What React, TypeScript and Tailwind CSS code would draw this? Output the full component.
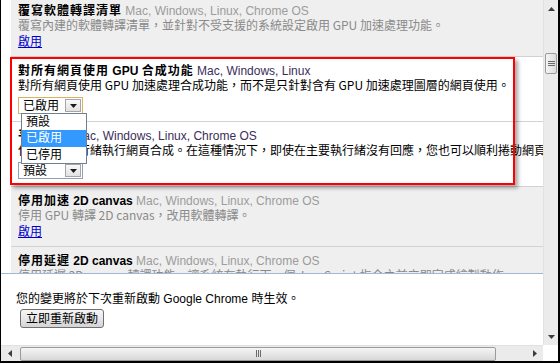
import React from "react";

const T = ({ children }: { children: React.ReactNode }) => (
  <span className="tracking-[1px]">{children}</span>
);

const Tri = ({ dir, color = "#3c3c3c" }: { dir: "up" | "down" | "left" | "right"; color?: string }) => {
  const pts: Record<string, string> = {
    up: "0,4 3.5,0 7,4",
    down: "0,0 7,0 3.5,4",
    left: "4,0 4,7 0,3.5",
    right: "0,0 0,7 4,3.5",
  };
  const w = dir === "up" || dir === "down" ? 7 : 4;
  const h = dir === "up" || dir === "down" ? 4 : 7;
  return (
    <svg width={w} height={h} viewBox={`0 0 ${w} ${h}`}>
      <polygon points={pts[dir]} fill={color} />
    </svg>
  );
};

function Item({
  title,
  platforms,
  desc,
  disabled,
  children,
}: {
  title: React.ReactNode;
  platforms: string;
  desc: React.ReactNode;
  disabled?: boolean;
  children?: React.ReactNode;
}) {
  return (
    <div
      className={`${disabled ? "bg-[#efefef]" : "bg-white"} border-b border-[#d2d2d2] pl-[7px] pt-[7px] pb-[7px] whitespace-nowrap overflow-hidden`}
    >
      <div className="h-[14px] leading-[14px]">
        <span className="font-bold text-black">{title}</span>{" "}
        <span className={disabled ? "text-[#9c9c9c]" : "text-[#3a2d5c]"}>{platforms}</span>
      </div>
      <div
        className={`h-[14px] leading-[14px] font-['Noto_Sans_CJK_TC',sans-serif] ${disabled ? "text-[#8a8a8a]" : "text-black"}`}
      >
        {desc}
      </div>
      {children}
    </div>
  );
}

function Combo({ value, focused }: { value: string; focused?: boolean }) {
  return (
    <div
      className={`mt-[5px] w-[65px] h-[17px] flex items-center justify-between border ${focused ? "border-[#dcb062]" : "border-[#8fa3b8]"} bg-white`}
    >
      <span className="pl-[4px] leading-[14px] text-black">{value}</span>
      <div className="mr-[1px] w-[16px] h-[13px] flex items-center justify-center border border-[#a6a6a6] bg-gradient-to-b from-[#fafafa] to-[#e2e2e2]">
        <Tri dir="down" color="#1a1a1a" />
      </div>
    </div>
  );
}

export default function App() {
  return (
    <div
      className="relative w-[560px] h-[363px] overflow-hidden bg-white border-l border-l-black border-r-2 border-r-black border-b-2 border-b-black text-[12px]"
      style={{ fontFamily: '"Liberation Sans", "Noto Sans CJK TC", sans-serif' }}
    >
      <div className="flex h-[345px]">
        <div className="w-[542px] flex flex-col">
          <div className="h-[273px] overflow-hidden pl-[10px]">
            <div className="mt-[-3px]">
              <Item
                disabled
                title={<T>覆寫軟體轉譯清單</T>}
                platforms="Mac, Windows, Linux, Chrome OS"
                desc="覆寫內建的軟體轉譯清單，並針對不受支援的系統設定啟用 GPU 加速處理功能。"
              >
                <div className="mt-[3px] h-[14px] leading-[14px]">
                  <span className="text-[#0000cc] underline">啟用</span>
                </div>
              </Item>
              <Item
                title={
                  <>
                    <T>對所有網頁使用</T> GPU <T>合成功能</T>
                  </>
                }
                platforms="Mac, Windows, Linux"
                desc="對所有網頁使用 GPU 加速處理合成功能，而不是只針對含有 GPU 加速處理圖層的網頁使用。"
              >
                <Combo value="已啟用" focused />
              </Item>
              <Item
                title={<T>平行合成</T>}
                platforms="Mac, Windows, Linux, Chrome OS"
                desc="使用次要執行緒執行網頁合成。在這種情況下，即使在主要執行緒沒有回應，您也可以順利捲動網頁。"
              >
                <Combo value="預設" />
              </Item>
              <Item
                disabled
                title={
                  <>
                    <T>停用加速</T> 2D canvas
                  </>
                }
                platforms="Mac, Windows, Linux, Chrome OS"
                desc="停用 GPU 轉譯 2D canvas，改用軟體轉譯。"
              >
                <div className="mt-[3px] h-[14px] leading-[14px]">
                  <span className="text-[#0000cc] underline">啟用</span>
                </div>
              </Item>
              <Item
                disabled
                title={
                  <>
                    <T>停用延遲</T> 2D canvas
                  </>
                }
                platforms="Mac, Windows, Linux, Chrome OS"
                desc="停用延遲 2D canvas 轉譯功能，讓系統在執行下一個 JavaScript 指令之前立即完成繪製動作。"
              >
                <div className="mt-[3px] h-[14px] leading-[14px]">
                  <span className="text-[#0000cc] underline">啟用</span>
                </div>
              </Item>
            </div>
          </div>
          <div className="flex-1 border-t border-[#9db9d6] bg-white pl-[15px] pt-[18px]">
            <div className="h-[14px] leading-[14px] text-black whitespace-nowrap">
              您的變更將於下次重新啟動 Google Chrome 時生效。
            </div>
            <button className="mt-[3px] ml-[4px] h-[19px] w-[84px] flex items-center justify-center rounded-[3px] border border-[#707070] bg-gradient-to-b from-[#f6f6f6] via-[#e8e8e8] to-[#d3d3d3] text-black leading-[14px]">
              立即重新啟動
            </button>
          </div>
        </div>
        <div className="w-[15px] flex flex-col bg-[#ebebeb] border-l border-[#e2e2e2]">
          <div className="h-[17px] flex items-center justify-center">
            <Tri dir="up" />
          </div>
          <div className="h-[36px]" />
          <div className="mx-[1px] h-[21px] rounded-[2px] border border-[#9b9b9b] bg-gradient-to-r from-[#f5f5f5] to-[#dcdcdc] flex flex-col items-center justify-center gap-[1px]">
            <div className="w-[7px] h-[1px] bg-[#6a6a6a]" />
            <div className="w-[7px] h-[1px] bg-[#6a6a6a]" />
            <div className="w-[7px] h-[1px] bg-[#6a6a6a]" />
          </div>
          <div className="flex-1" />
          <div className="h-[17px] flex items-center justify-center">
            <Tri dir="down" />
          </div>
        </div>
      </div>
      <div className="flex h-[16px]">
        <div className="w-[542px] flex items-center bg-[#ebebeb] border-t border-[#e0e0e0]">
          <div className="w-[17px] h-full flex items-center justify-center">
            <Tri dir="left" />
          </div>
          <div className="ml-[2px] w-[476px] h-[14px] rounded-[2px] border border-[#9b9b9b] bg-gradient-to-b from-[#f5f5f5] to-[#d8d8d8] flex items-center justify-center gap-[1px]">
            <div className="w-[1px] h-[7px] bg-[#6a6a6a]" />
            <div className="w-[1px] h-[7px] bg-[#6a6a6a]" />
            <div className="w-[1px] h-[7px] bg-[#6a6a6a]" />
          </div>
          <div className="flex-1" />
          <div className="w-[17px] h-full flex items-center justify-center">
            <Tri dir="right" />
          </div>
        </div>
        <div className="flex-1 bg-white" />
      </div>

      {/* open dropdown list */}
      <div className="absolute left-[20px] top-[113px] w-[66px] h-[51px] border border-[#6f7f94] bg-white flex flex-col">
        <div className="h-[16px] leading-[16px] pl-[4px] text-black">預設</div>
        <div className="h-[17px] leading-[17px] pl-[4px] bg-[#3399ff] text-white">已啟用</div>
        <div className="h-[16px] leading-[16px] pl-[4px] text-black">已停用</div>
      </div>

      {/* red annotation box */}
      <div className="absolute left-[9px] top-[57px] w-[505px] h-[128px] border-2 border-[#ff0000] shadow-[3px_3px_4px_rgba(0,0,0,0.35)] pointer-events-none" />
    </div>
  );
}
